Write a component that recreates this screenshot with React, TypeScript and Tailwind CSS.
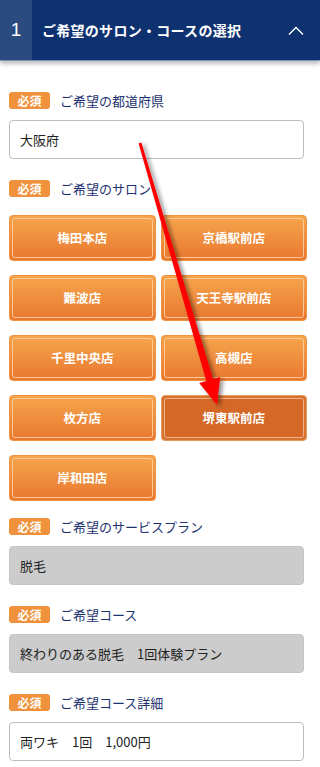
import React from "react";

const salons = ["梅田本店", "京橋駅前店", "難波店", "天王寺駅前店", "千里中央店", "高槻店", "枚方店", "堺東駅前店", "岸和田店"];
const selected = "堺東駅前店";

const font = { fontFamily: '"Noto Sans CJK JP", "Noto Sans", sans-serif' };

const Label: React.FC<{ text: string; className?: string }> = ({ text, className }) => (
    <div className={`flex items-center h-[17px] ${className ?? ""}`}>
        <span className="flex items-center justify-center w-[41px] h-[17px] rounded-[3px] bg-[#f0913b] text-white text-[12px] font-bold leading-none">必須</span>
        <span className="ml-[10px] text-[13px] text-[#1d3370] leading-none">{text}</span>
    </div>
);

const Field: React.FC<{ value: string; gray?: boolean; className?: string }> = ({ value, gray, className }) => (
    <div
        className={`h-[39px] mr-[3px] flex items-center px-[10px] rounded-[4px] border text-[13px] text-[#222] ${gray ? "bg-[#cccccc] border-[#c4c4c4]" : "bg-white border-[#bdbdbd]"} ${className ?? ""}`}
    >
        {value}
    </div>
);

export default function App() {
    return (
        <div className="relative w-[320px] min-h-[767px] bg-white overflow-hidden" style={font}>
            {/* ヘッダー */}
            <div className="relative h-[61px] flex bg-[#0e3170] border-b border-[#7d93bd] shadow-[0_3px_4px_rgba(0,0,0,0.25)]">
                <div className="w-[32px] bg-[#2a4a80] flex items-center justify-center text-white text-[19px]" style={{ fontFamily: '"Liberation Sans", sans-serif' }}>1</div>
                <div className="flex-1 flex items-center pl-[10px] text-white text-[14px] font-bold tracking-[0.02em]">ご希望のサロン・コースの選択</div>
                <div className="w-[40px] flex items-center justify-center pr-[8px]">
                    <svg width="16" height="9" viewBox="0 0 16 9" fill="none">
                        <path d="M1 8.5L8 1.5L15 8.5" stroke="white" strokeWidth="1.4" />
                    </svg>
                </div>
            </div>

            <div className="pl-[9px] pr-[13px] pt-[31px]">
                <Label text="ご希望の都道府県" />
                <Field value="大阪府" className="mt-[11px]" />

                <Label text="ご希望のサロン" className="mt-[21px]" />
                <div className="mt-[18px] grid grid-cols-2 gap-x-[5px] gap-y-[14px]">
                    {salons.map((s) => (
                        <div
                            key={s}
                            className={`h-[46px] rounded-[4px] p-[2px] ${s === selected ? "bg-[#d8722f] border border-[#e49a5c]" : "bg-gradient-to-b from-[#f5a54c] to-[#e9772f] border border-[#ee9141]"}`}
                        >
                            <div
                                className={`h-full rounded-[3px] border flex items-center justify-center text-white text-[12.5px] font-bold ${s === selected ? "bg-[#d56826] border-[#eeb48a]" : "border-[#fbc995]"}`}
                            >
                                {s}
                            </div>
                        </div>
                    ))}
                </div>

                <Label text="ご希望のサービスプラン" className="mt-[17px]" />
                <Field value="脱毛" gray className="mt-[11px]" />

                <Label text="ご希望コース" className="mt-[21px]" />
                <Field value="終わりのある脱毛　1回体験プラン" gray className="mt-[11px]" />

                <Label text="ご希望コース詳細" className="mt-[21px]" />
                <Field value="両ワキ　1回　1,000円" className="mt-[11px]" />
            </div>

            {/* 注釈の矢印 */}
            <svg className="absolute left-0 top-0 pointer-events-none" width="320" height="767" viewBox="0 0 320 767">
                <defs>
                    <filter id="sh" x="-50%" y="-50%" width="200%" height="200%">
                        <feDropShadow dx="3" dy="2" stdDeviation="2" floodColor="#000" floodOpacity="0.45" />
                    </filter>
                </defs>
                <polygon
                    points="138.6,143.4 141.4,142.6 213.1,379 220.2,376.9 217,405 199.2,383.1 206.3,381"
                    fill="#ff0000"
                    filter="url(#sh)"
                />
            </svg>
        </div>
    );
}
